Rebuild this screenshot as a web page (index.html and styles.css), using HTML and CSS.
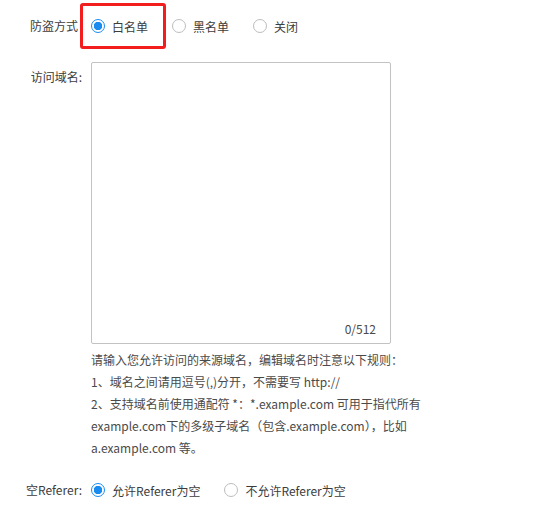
FILE: index.html
```html
<!DOCTYPE html>
<html lang="zh-CN">
<head>
  <meta charset="UTF-8">
  <meta name="viewport" content="width=device-width, initial-scale=1.0">
  <title>防盗链设置</title>
  <link rel="stylesheet" href="styles.css">
</head>
<body>
  <div class="form">
    <!-- 防盗方式 -->
    <div class="form-row">
      <div class="form-label label-mode">防盗方式</div>
      <div class="radio-group">
        <label class="radio radio-marked">
          <span class="radio-circle checked"></span>白名单
        </label>
        <label class="radio">
          <span class="radio-circle"></span>黑名单
        </label>
        <label class="radio">
          <span class="radio-circle"></span>关闭
        </label>
      </div>
    </div>

    <!-- 访问域名 -->
    <div class="form-row row-domain">
      <div class="form-label">访问域名:</div>
      <div class="form-field">
        <div class="textarea-wrap">
          <textarea class="textarea"></textarea>
          <span class="counter">0/512</span>
        </div>
        <div class="help">
          <div>请输入您允许访问的来源域名，编辑域名时注意以下规则：</div>
          <div>1、域名之间请用逗号(,)分开，不需要写 http://</div>
          <div>2、支持域名前使用通配符 *：*.example.com 可用于指代所有<br>example.com下的多级子域名（包含.example.com），比如<br>a.example.com 等。</div>
        </div>
      </div>
    </div>

    <!-- 空Referer -->
    <div class="form-row row-referer">
      <div class="form-label">空Referer:</div>
      <div class="radio-group">
        <label class="radio">
          <span class="radio-circle checked"></span>允许Referer为空
        </label>
        <label class="radio">
          <span class="radio-circle"></span>不允许Referer为空
        </label>
      </div>
    </div>
  </div>
</body>
</html>
```

FILE: styles.css
```css
body {
  margin: 0;
  background-color: #ffffff;
  font-family: "Noto Sans CJK SC", "Noto Sans", sans-serif;
  font-size: 12px;
  color: #444;
}

.form {
  padding-top: 11px;
}

.form-row {
  display: flex;
  align-items: flex-start;
}

.form-label {
  width: 82px;
  padding-right: 9px;
  text-align: right;
  line-height: 30px;
  color: #3c3c3c;
}

.label-mode {
  width: 78px;
  padding-right: 13px;
}

.radio-group {
  display: flex;
  align-items: center;
  gap: 24px;
  height: 30px;
}

.radio {
  position: relative;
  display: flex;
  align-items: center;
  height: 30px;
  color: #3c3c3c;
  cursor: pointer;
}

.radio-circle {
  box-sizing: border-box;
  width: 14px;
  height: 14px;
  margin-right: 7px;
  border: 1px solid #bdbdbd;
  border-radius: 50%;
  background-color: #fff;
}

.radio-circle.checked {
  border-color: #1a8cf0;
  background: radial-gradient(circle, #1a8cf0 0 4px, #fff 4.5px);
}

/* red highlight frame around the first option */
.radio-marked::after {
  content: "";
  position: absolute;
  left: -11px;
  right: -18px;
  top: -8px;
  bottom: -8px;
  border: 3px solid #f21d1d;
  border-radius: 3px;
}

.row-domain {
  margin-top: 21px;
}

.textarea-wrap {
  position: relative;
  width: 300px;
  height: 282px;
}

.textarea {
  box-sizing: border-box;
  width: 100%;
  height: 100%;
  margin: 0;
  padding: 6px 8px;
  border: 1px solid #c2c2c2;
  border-radius: 2px;
  resize: none;
  font-family: inherit;
  font-size: 12px;
  outline: none;
}

.counter {
  position: absolute;
  right: 15px;
  bottom: 6px;
  line-height: 18px;
  color: #4a4a4a;
}

.help {
  margin-top: 5px;
  line-height: 22px;
  color: #4a4a4a;
  white-space: nowrap;
}

.row-referer {
  margin-top: 16px;
}
```
